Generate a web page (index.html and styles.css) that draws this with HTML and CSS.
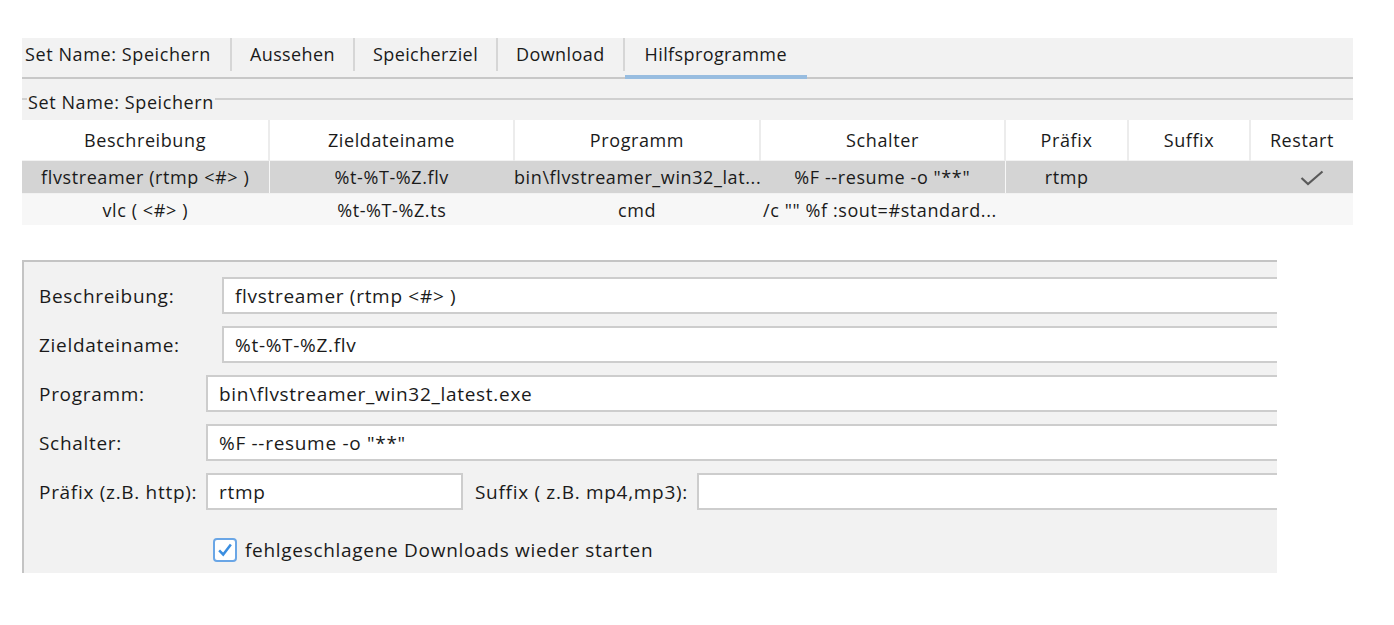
FILE: index.html
```html
<!DOCTYPE html>
<html lang="de">
<head>
  <meta charset="UTF-8" />
  <meta name="viewport" content="width=device-width, initial-scale=1.0" />
  <title>Hilfsprogramme</title>
  <link rel="stylesheet" href="styles.css">
</head>
<body>
  <div class="seite">
    <div class="oben">
      <div class="tabs">
        <div class="tab erster">Set Name: Speichern</div>
        <div class="tab">Aussehen</div>
        <div class="tab">Speicherziel</div>
        <div class="tab">Download</div>
        <div class="tab aktiv">Hilfsprogramme</div>
      </div>

      <div class="legende">
        <span class="strich kurz"></span>
        <span class="legende-text">Set Name: Speichern</span>
        <span class="strich"></span>
      </div>

      <table class="tabelle">
        <colgroup>
          <col style="width:247px"><col style="width:245px"><col style="width:246px"><col style="width:245px">
          <col style="width:123px"><col style="width:122px"><col style="width:103px">
        </colgroup>
        <thead>
          <tr>
            <th>Beschreibung</th>
            <th>Zieldateiname</th>
            <th>Programm</th>
            <th>Schalter</th>
            <th>Präfix</th>
            <th>Suffix</th>
            <th>Restart</th>
          </tr>
        </thead>
        <tbody>
          <tr class="gewaehlt">
            <td>flvstreamer (rtmp &lt;#&gt; )</td>
            <td>%t-%T-%Z.flv</td>
            <td>bin\flvstreamer_win32_lat...</td>
            <td>%F --resume -o "**"</td>
            <td>rtmp</td>
            <td></td>
            <td>
              <svg class="haken" viewBox="0 0 24 16" width="24" height="16">
                <path d="M1.5 8 L8 14 L22.5 1.5" fill="none" stroke="#5a5a5a" stroke-width="2.2"/>
              </svg>
            </td>
          </tr>
          <tr>
            <td>vlc ( &lt;#&gt; )</td>
            <td>%t-%T-%Z.ts</td>
            <td>cmd</td>
            <td class="links">/c "" %f :sout=#standard...</td>
            <td></td>
            <td></td>
            <td></td>
          </tr>
        </tbody>
      </table>
    </div>

    <div class="formular">
      <div class="zeile">
        <label class="etikett breit">Beschreibung:</label>
        <div class="feld">flvstreamer (rtmp &lt;#&gt; )</div>
      </div>
      <div class="zeile">
        <label class="etikett breit">Zieldateiname:</label>
        <div class="feld">%t-%T-%Z.flv</div>
      </div>
      <div class="zeile">
        <label class="etikett">Programm:</label>
        <div class="feld">bin\flvstreamer_win32_latest.exe</div>
      </div>
      <div class="zeile">
        <label class="etikett">Schalter:</label>
        <div class="feld">%F --resume -o "**"</div>
      </div>
      <div class="zeile">
        <label class="etikett">Präfix (z.B. http):</label>
        <div class="feld klein">rtmp</div>
        <label class="etikett suffix">Suffix ( z.B. mp4,mp3):</label>
        <div class="feld"></div>
      </div>
      <div class="zeile check">
        <span class="kasten">
          <svg viewBox="0 0 20 20" width="18" height="18">
            <path d="M3.5 10.5 L8 15 L16.5 4" fill="none" stroke="#3b8ee0" stroke-width="2.8"/>
          </svg>
        </span>
        <span>fehlgeschlagene Downloads wieder starten</span>
      </div>
    </div>
  </div>
</body>
</html>
```

FILE: styles.css
```css
body {
  margin: 0;
  padding: 0;
  background: #ffffff;
  font-family: 'Open Sans', 'Noto Sans', sans-serif;
  font-size: 18px;
  letter-spacing: 0.6px;
  color: #1a1a1a;
}

.seite {
  padding: 38px 0 0 22px;
}

.oben {
  width: 1331px;
  background: #f2f2f2;
}

.tabs {
  display: flex;
  height: 39px;
  border-bottom: 2px solid #c8c8c8;
  letter-spacing: 0.4px;
}

.tab {
  padding: 0 18px;
  line-height: 32px;
  border-right: 2px solid #d6d6d6;
  height: 33px;
  white-space: nowrap;
}

.tab.erster {
  padding-left: 3px;
  padding-right: 19px;
  letter-spacing: 0.6px;
}

.tab.aktiv {
  border-right: none;
  box-sizing: border-box;
  border-bottom: 4px solid #98bde0;
  padding: 0 20px;
  margin-bottom: -2px;
  height: 41px;
}

.legende {
  display: flex;
  align-items: center;
  height: 41px;
}

.legende-text {
  padding: 5px 1px 0 1px;
}

.strich {
  flex: 1;
  height: 0;
  border-top: 2px solid #d0d0d0;
  margin-top: -1px;
}

.strich.kurz {
  flex: 0 0 5px;
}

.tabelle {
  width: 1331px;
  border-collapse: collapse;
  table-layout: fixed;
}

.tabelle th {
  background: #ffffff;
  font-weight: normal;
  height: 40px;
  padding: 0;
  border-left: 2px solid #ececec;
  border-bottom: 1px solid #f2f2f2;
}

.tabelle th:first-child {
  border-left: none;
}

.tabelle td {
  text-align: center;
  white-space: nowrap;
  overflow: hidden;
  padding: 0;
  height: 31px;
  background: #f7f7f7;
}

.tabelle tr.gewaehlt td {
  background: #d4d4d4;
  height: 32px;
  border-bottom: 1px solid #f2f2f2;
}

.tabelle td:nth-child(2),
.tabelle td:nth-child(5) {
  border-left: 1px solid #f7f7f7;
}

.tabelle td.links {
  text-align: left;
  padding-left: 3px;
}

.haken {
  display: block;
  margin: 1px 0 0 50px;
}

.formular {
  width: 1255px;
  margin-top: 35px;
  background: #f2f2f2;
  border-top: 2px solid #c4c4c4;
  border-left: 2px solid #c4c4c4;
  box-sizing: border-box;
  padding: 15px 0 10px 15px;
  overflow: hidden;
  height: 313px;
  font-size: 19px;
  letter-spacing: 0.7px;
}

.zeile {
  display: flex;
  align-items: center;
  height: 37px;
  margin-bottom: 12px;
  white-space: nowrap;
}

.etikett {
  width: 167px;
  flex: 0 0 auto;
}

.etikett.breit {
  width: 183px;
}

.etikett.suffix {
  width: 222px;
  padding: 0 0 0 12px;
}

.feld {
  flex: 1;
  height: 37px;
  line-height: 35px;
  box-sizing: border-box;
  background: #ffffff;
  border: 2px solid #cdcdcd;
  border-right: none;
  padding-left: 11px;
  margin-right: -2px;
}

.feld.klein {
  flex: 0 0 257px;
  border-right: 2px solid #cdcdcd;
  margin-right: 0;
}

.zeile.check {
  margin-top: 21px;
  padding-left: 174px;
}

.kasten {
  width: 24px;
  height: 24px;
  box-sizing: border-box;
  border: 2px solid #6aa6e6;
  border-radius: 4px;
  background: #ffffff;
  display: flex;
  align-items: center;
  justify-content: center;
  margin-right: 8px;
}
```
